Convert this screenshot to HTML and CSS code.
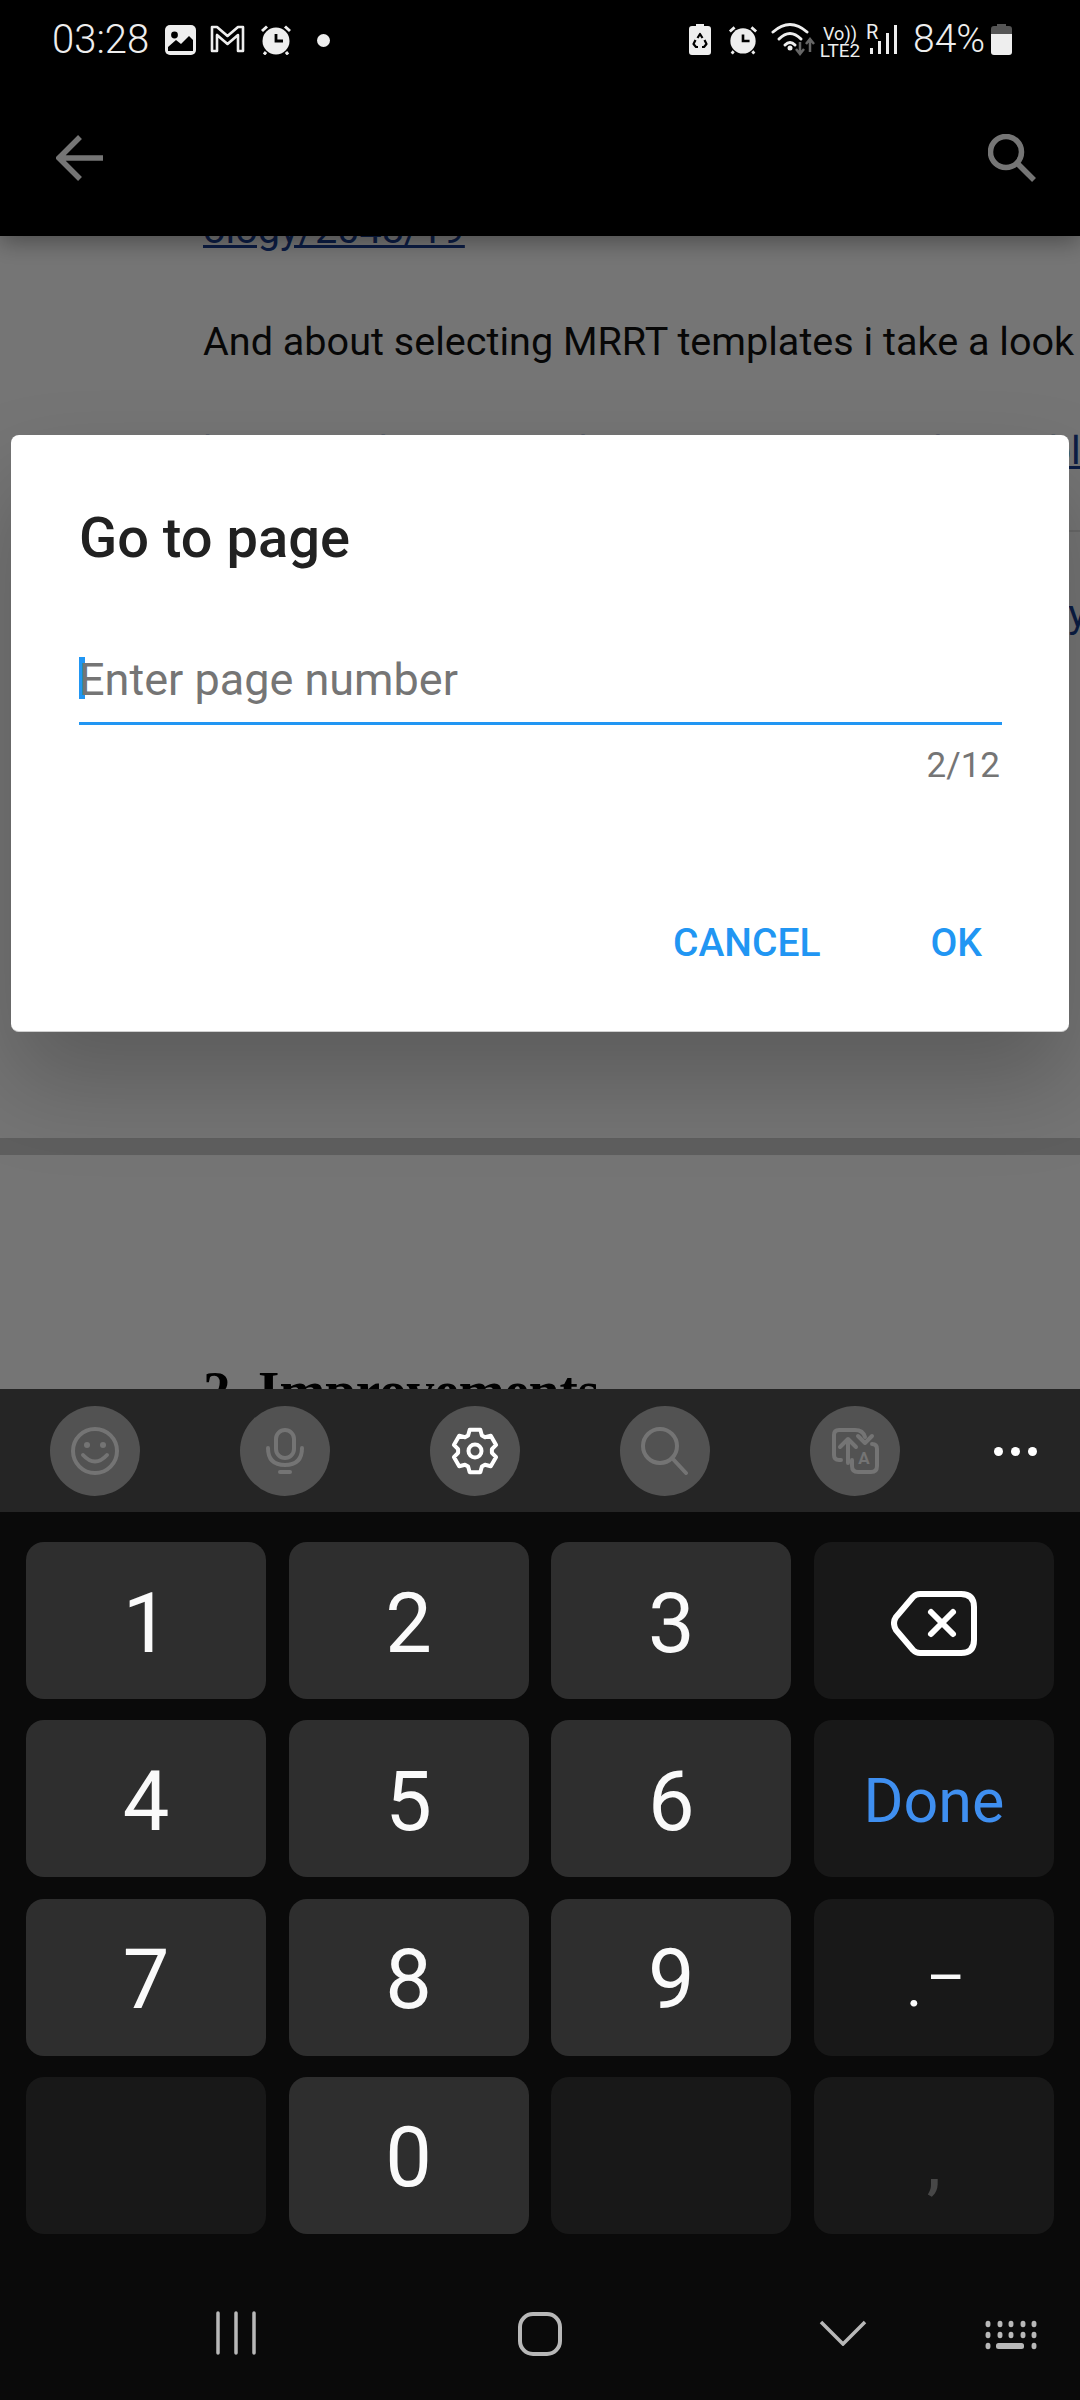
FILE: index.html
```html
<!DOCTYPE html>
<html lang="en">
<head>
    <meta charset="UTF-8">
    <meta name="viewport" content="width=device-width, initial-scale=1.0">
    <title>Go to page</title>
    <link rel="stylesheet" href="styles.css">
</head>
<body>

    <!-- Status bar -->
    <div class="status-bar">
        <span class="time">03:28</span>
        <svg class="st-gallery" width="31" height="30" viewBox="0 0 31 30"><rect width="31" height="30" rx="5" fill="#eee"/><circle cx="9.5" cy="10" r="3.4" fill="#000"/><path d="M3 22L11 15L16 19L24 11L28 15V26H3Z" fill="#000"/></svg>
        <svg class="st-gmail" width="35" height="28" viewBox="0 0 35 28"><path d="M2 26V2H7L17.5 11L28 2H33V26H28V10L17.5 19L7 10V26Z" fill="none" stroke="#eee" stroke-width="2.6" stroke-linejoin="round"/></svg>
        <svg class="st-alarm" width="32" height="30" viewBox="0 0 32 30"><circle cx="16" cy="16" r="13.5" fill="#eee"/><path d="M16 9V16H23" fill="none" stroke="#000" stroke-width="2.8"/><path d="M2 6L7 1.500M30 6L25 1.500M6 27L4 29.500M26 27L28 29.500" stroke="#eee" stroke-width="3"/></svg>
        <span class="st-dot"></span>

        <div class="status-right">
            <svg class="st-battery-saver" width="22" height="31" viewBox="0 0 22 31"><path d="M7 0H15V2H19Q22 2 22 5V28Q22 31 19 31H3Q0 31 0 28V5Q0 2 3 2H7Z" fill="#eee"/><path d="M8.500 14L11 10L13.500 14M15.500 16L17.500 20L15 23H13M9 23H7L4.500 20L6.500 16" fill="none" stroke="#000" stroke-width="2.200" stroke-linejoin="round"/></svg>
            <svg class="st-alarm2" width="30" height="30" viewBox="0 0 32 30"><circle cx="16" cy="16" r="13.5" fill="#eee"/><path d="M16 9V16H23" fill="none" stroke="#000" stroke-width="2.8"/><path d="M2 6L7 1.500M30 6L25 1.500M6 27L4 29.500M26 27L28 29.500" stroke="#eee" stroke-width="3"/></svg>
            <svg class="st-wifi" width="46" height="34" viewBox="0 0 46 34"><g fill="none" stroke="#eee" stroke-width="3" stroke-linecap="round"><path d="M2 10Q19 -5 36 10"/><path d="M8 17Q19 6 30 17"/><path d="M14 23Q19 18 24 23"/></g><circle cx="19" cy="26" r="2.500" fill="#eee"/><path d="M29 20V31M25 27L29 32L33 27" fill="none" stroke="#666" stroke-width="2.500"/><path d="M39 30V18M35 22L39 17L43 22" fill="none" stroke="#666" stroke-width="2.500"/></svg>
            <div class="volte"><span class="vo">Vo))</span><span class="lte">LTE2</span></div>
            <div class="signal">
                <span class="roam">R</span>
                <svg width="30" height="29" viewBox="0 0 30 29"><path d="M2 23H5V29H2ZM10 16H13V29H10ZM18 8H21V29H18ZM26 0H29V29H26Z" fill="#eee"/></svg>
            </div>
            <span class="percent">84%</span>
            <svg class="st-battery" width="21" height="31" viewBox="0 0 21 31"><path d="M6 0H15V2H18Q21 2 21 5V10H0V5Q0 2 3 2H6Z" fill="#555"/><path d="M0 10H21V28Q21 31 18 31H3Q0 31 0 28Z" fill="#eee"/></svg>
        </div>
    </div>

    <!-- App bar -->
    <div class="app-bar">
        <svg width="48" height="46" viewBox="0 0 48 46"><path d="M47 23H4M24 2L3 23L24 44" fill="none" stroke="#fff" stroke-width="5.500"/></svg>
        <svg width="48" height="48" viewBox="0 0 48 48"><circle cx="18" cy="18" r="15.500" fill="none" stroke="#fff" stroke-width="5.500"/><path d="M29 29L46 46" stroke="#fff" stroke-width="5.500"/></svg>
    </div>

    <!-- PDF page behind the dialog -->
    <div class="doc">
        <p class="doc-line first"><a class="doc-link" href="#">ology/2048/19</a></p>
        <p class="doc-line tight">And about selecting MRRT templates i take a look</p>
        <p class="doc-line"><a class="doc-link" href="#">https://radreport.org/home/50/mrrt-template/table</a></p>
        <div class="doc-rule"></div>
        <p class="doc-line"><a class="doc-link" href="#">https://radreport.org/home/templates/report/1/xy</a></p>
        <div class="page-gap"></div>
        <h2 class="doc-heading">2. Improvements</h2>
    </div>

    <!-- Keyboard -->
    <div class="keyboard">
        <div class="kb-tools">
            <div class="kb-tool"><span class="kb-circle">
                <svg width="50" height="50" viewBox="0 0 50 50"><g fill="none" stroke="#747474" stroke-width="4"><circle cx="25" cy="25" r="22"/><path d="M13 29Q25 42 37 29" stroke-linecap="round"/></g><circle cx="17" cy="19" r="3" fill="#747474"/><circle cx="33" cy="19" r="3" fill="#747474"/></svg>
            </span></div>
            <div class="kb-tool"><span class="kb-circle">
                <svg width="38" height="46" viewBox="0 0 38 46"><g fill="none" stroke="#747474" stroke-width="4" stroke-linecap="round"><rect x="10" y="2" width="18" height="28" rx="9"/><path d="M2 20Q2 37 19 37Q36 37 36 20"/><path d="M14 44H24"/></g></svg>
            </span></div>
            <div class="kb-tool"><span class="kb-circle">
                <svg width="48" height="48" viewBox="0 0 48 48"><path d="M18.700 2.700H29.300L30.900 8.500L34 10.200L39.800 8.700L45.100 17.900L40.900 22.200V25.800L45.100 30.100L39.800 39.300L34 37.800L30.900 39.500L29.300 45.300H18.700L17.100 39.500L14 37.800L8.200 39.300L2.900 30.100L7.100 25.800V22.200L2.900 17.900L8.200 8.700L14 10.200L17.100 8.500Z" fill="none" stroke="#fff" stroke-width="4" stroke-linejoin="round"/><circle cx="24" cy="24" r="6.500" fill="none" stroke="#fff" stroke-width="4"/></svg>
            </span></div>
            <div class="kb-tool"><span class="kb-circle">
                <svg width="48" height="48" viewBox="0 0 48 48"><g fill="none" stroke="#747474" stroke-width="4" stroke-linecap="round"><circle cx="19" cy="19" r="17"/><path d="M31 31L45 46"/></g></svg>
            </span></div>
            <div class="kb-tool"><span class="kb-circle">
                <svg width="48" height="48" viewBox="0 0 48 48"><g fill="none" stroke="#747474" stroke-width="4" stroke-linecap="round" stroke-linejoin="round"><path d="M10 33H8Q3 33 3 28V8Q3 3 8 3H24Q32 3 34 10"/><path d="M17 36V12M9 20L17 12L25 20"/><path d="M27 9L34 16L41 9"/><path d="M41 17Q46 17 46 22V39Q46 45 40 45H27Q21 45 21 39V33"/></g><text class="kb-a" x="33" y="37">A</text></svg>
            </span></div>
            <div class="kb-tool more"><div class="kb-more"><span></span><span></span><span></span></div></div>
        </div>

        <div class="kb-keys">
            <div class="key">1</div>
            <div class="key">2</div>
            <div class="key">3</div>
            <div class="key dim">
                <svg width="86" height="65" viewBox="0 0 86 65"><path d="M29 3H70Q83 3 83 16V49Q83 62 70 62H29Q25 62 22 59L5 39Q1 32 5 26L22 6Q25 3 29 3Z" fill="none" stroke="#fff" stroke-width="6"/><path d="M40 21L62 43M62 21L40 43" stroke="#fff" stroke-width="6" stroke-linecap="round"/></svg>
            </div>
            <div class="key">4</div>
            <div class="key">5</div>
            <div class="key">6</div>
            <div class="key dim done">Done</div>
            <div class="key">7</div>
            <div class="key">8</div>
            <div class="key">9</div>
            <div class="key dim symbols"><span>.</span><span class="minus">–</span></div>
            <div class="key dim"></div>
            <div class="key">0</div>
            <div class="key dim"></div>
            <div class="key dim comma">,</div>
        </div>

        <!-- Navigation bar -->
        <div class="nav-bar">
            <svg class="nav-recents" width="40" height="44" viewBox="0 0 40 44"><path d="M2 2V42M20 2V42M38 2V42" stroke="#b8b8b8" stroke-width="3.500" stroke-linecap="round"/></svg>
            <svg class="nav-home" width="46" height="46" viewBox="0 0 46 46"><rect x="3" y="3" width="40" height="40" rx="13" fill="none" stroke="#b8b8b8" stroke-width="4"/></svg>
            <svg class="nav-back" width="48" height="26" viewBox="0 0 48 26"><path d="M2 2L24 24L46 2" fill="none" stroke="#b8b8b8" stroke-width="3.500"/></svg>
            <svg class="nav-keyboard" width="52" height="30" viewBox="0 0 52 30"><g fill="#b8b8b8"><ellipse cx="3" cy="4" rx="2.500" ry="3.200"/><ellipse cx="15" cy="4" rx="2.500" ry="3.200"/><ellipse cx="26" cy="4" rx="2.500" ry="3.200"/><ellipse cx="38" cy="4" rx="2.500" ry="3.200"/><ellipse cx="49" cy="4" rx="2.500" ry="3.200"/><ellipse cx="3" cy="15" rx="2.500" ry="3.200"/><ellipse cx="15" cy="15" rx="2.500" ry="3.200"/><ellipse cx="26" cy="15" rx="2.500" ry="3.200"/><ellipse cx="38" cy="15" rx="2.500" ry="3.200"/><ellipse cx="49" cy="15" rx="2.500" ry="3.200"/><ellipse cx="3" cy="26" rx="2.500" ry="3.200"/><rect x="11" y="23" width="28" height="6" rx="2.500"/><ellipse cx="49" cy="26" rx="2.500" ry="3.200"/></g></svg>
        </div>
    </div>

    <!-- Scrim and dialog -->
    <div class="scrim">
        <div class="dialog">
            <h1 class="dialog-title">Go to page</h1>
            <div class="page-input">
                <span class="caret"></span>
                <span class="placeholder">Enter page number</span>
            </div>
            <div class="counter">2/12</div>
            <div class="dialog-actions">
                <button class="dialog-btn" type="button">CANCEL</button>
                <button class="dialog-btn" type="button">OK</button>
            </div>
        </div>
    </div>

</body>
</html>
```

FILE: styles.css
```css
* {
    box-sizing: border-box;
}
body {
    font-family: Roboto, "Noto Sans", sans-serif;
    margin: 0;
    width: 1080px;
    height: 2400px;
    overflow: hidden;
    position: relative;
    display: flex;
    flex-direction: column;
    background-color: #0a0a0a;
}
svg {
    flex-shrink: 0;
}

/* Status bar */
.status-bar {
    height: 80px;
    padding: 25px 0 0 52px;
    display: flex;
    align-items: flex-start;
    background-color: #000;
    color: #eee;
    position: relative;
    z-index: 3;
}
.time {
    font-size: 40px;
    font-weight: 300;
    line-height: 29px;
    width: 113px;
}
.st-gmail {
    margin-left: 14px;
}
.st-alarm {
    margin-left: 15px;
}
.st-dot {
    width: 13px;
    height: 13px;
    margin: 9px 0 0 25px;
    border-radius: 50%;
    background-color: #eee;
}
.status-right {
    margin-left: auto;
    padding-right: 68px;
    display: flex;
    align-items: flex-start;
}
.st-battery-saver {
    margin-top: -1px;
}
.st-alarm2 {
    margin-left: 17px;
}
.st-wifi {
    margin: -3px 0 0 13px;
}
.volte {
    width: 40px;
    margin-left: 3px;
    display: flex;
    flex-direction: column;
    align-items: center;
    font-size: 18px;
    line-height: 17px;
}
.vo {
    font-size: 18px;
}
.lte {
    font-size: 19px;
}
.signal {
    position: relative;
    margin-left: 6px;
    padding-left: 2px;
    height: 29px;
}
.roam {
    position: absolute;
    left: 0;
    top: -3px;
    font-size: 20px;
    line-height: 20px;
}
.percent {
    margin-left: 15px;
    font-size: 39px;
    font-weight: 300;
    line-height: 29px;
    width: 78px;
}
.st-battery {
    margin-top: -1px;
}

/* App bar */
.app-bar {
    height: 156px;
    padding: 0 44px 0 56px;
    display: flex;
    align-items: center;
    justify-content: space-between;
    background-color: #000;
    box-shadow: 0 6px 22px rgba(0, 0, 0, 0.35);
    position: relative;
    z-index: 1;
}

/* PDF page */
.doc {
    flex: 1;
    min-height: 0;
    overflow: hidden;
    background-color: #fff;
    color: #111;
}
.doc-line {
    margin: 0 0 57px;
    padding-left: 203px;
    font-size: 39.6px;
    line-height: 55px;
    white-space: nowrap;
}
.doc-line.first {
    margin-top: -34px;
}
.doc-line.tight {
    margin-bottom: 54px;
}
.doc-link {
    color: #1a3f95;
}
.doc-rule {
    height: 2px;
    margin: -5px 0 54px 203px;
    background-color: #e4e4e4;
}
.page-gap {
    height: 17px;
    margin-top: 497px;
    background-color: #cfcfcf;
}
.doc-heading {
    margin: 206px 0 0;
    padding-left: 203px;
    font-family: "Liberation Serif", serif;
    font-size: 55px;
    font-weight: bold;
    line-height: 60px;
    color: #000;
}

/* Keyboard */
.keyboard {
    height: 1011px;
    flex-shrink: 0;
    display: flex;
    flex-direction: column;
    background-color: #0a0a0a;
    position: relative;
    z-index: 2;
}
.kb-tools {
    height: 123px;
    display: flex;
    background-color: #252525;
}
.kb-tool {
    width: 190px;
    flex-shrink: 0;
    display: flex;
    align-items: center;
    justify-content: center;
}
.kb-tool.more {
    width: 130px;
}
.kb-circle {
    width: 90px;
    height: 90px;
    border-radius: 50%;
    background-color: #525252;
    display: flex;
    align-items: center;
    justify-content: center;
}
.kb-a {
    font-family: Roboto, sans-serif;
    font-size: 17px;
    font-weight: 700;
    fill: #747474;
    text-anchor: middle;
}
.kb-more {
    display: flex;
    gap: 8px;
    margin-top: 2px;
}
.kb-more span {
    width: 9px;
    height: 9px;
    border-radius: 50%;
    background-color: #fff;
}
.kb-keys {
    padding: 30px 26px 0;
    display: grid;
    grid-template-columns: repeat(4, 240px);
    grid-auto-rows: 157px;
    column-gap: 22.67px;
    row-gap: 21.33px;
}
.key {
    display: flex;
    align-items: center;
    justify-content: center;
    padding-top: 5px;
    border-radius: 18px;
    background-color: #2e2e2e;
    color: #fafafa;
    font-size: 83px;
    line-height: 1;
}
.key.dim {
    background-color: #181818;
}
.done {
    color: #3f8ff0;
    font-size: 61px;
}
.symbols {
    font-size: 60px;
    padding: 17px 0 0 4px;
}
.minus {
    position: relative;
    top: -8px;
    margin-left: 4px;
}
.comma {
    color: #474747;
    font-size: 64px;
    font-weight: 500;
    padding-top: 20px;
}

/* Navigation bar */
.nav-bar {
    flex: 1;
    padding: 77px 0 0 216px;
    display: flex;
    align-items: flex-start;
}
.nav-home {
    margin-left: 261px;
}
.nav-back {
    margin: 9px 0 0 256px;
}
.nav-keyboard {
    margin: 9px 0 0 118px;
}

/* Scrim and dialog */
.scrim {
    position: absolute;
    left: 0;
    top: 0;
    width: 1080px;
    height: 1389px;
    background-color: rgba(0, 0, 0, 0.54);
    z-index: 1;
}
.dialog {
    position: absolute;
    left: 11px;
    top: 435px;
    width: 1058px;
    height: 597px;
    padding: 0 67px 0 68px;
    border-radius: 8px;
    border-bottom: 1px solid #cfcfcf;
    background-color: #fff;
    box-shadow: 0 50px 95px rgba(0, 0, 0, 0.22);
}
.dialog-title {
    margin: 0;
    padding-top: 71px;
    font-size: 56px;
    font-weight: 500;
    line-height: 64px;
    color: #212121;
}
.page-input {
    margin-top: 87px;
    height: 68px;
    display: flex;
    align-items: flex-start;
    border-bottom: 3px solid #2196f3;
}
.caret {
    width: 6px;
    height: 42px;
    flex-shrink: 0;
    background-color: #2196f3;
}
.placeholder {
    margin: -2px 0 0 -6px;
    font-size: 45px;
    line-height: 50px;
    color: #757575;
}
.counter {
    margin-top: 21px;
    padding-right: 2px;
    text-align: right;
    font-size: 35px;
    line-height: 40px;
    color: #757575;
}
.dialog-actions {
    margin-top: 134px;
    display: flex;
    justify-content: flex-end;
    gap: 110px;
    padding-right: 20px;
}
.dialog-btn {
    padding: 0;
    border: none;
    background: none;
    font-family: Roboto, sans-serif;
    font-size: 39px;
    font-weight: 500;
    line-height: 46px;
    color: #2196f3;
}
```
